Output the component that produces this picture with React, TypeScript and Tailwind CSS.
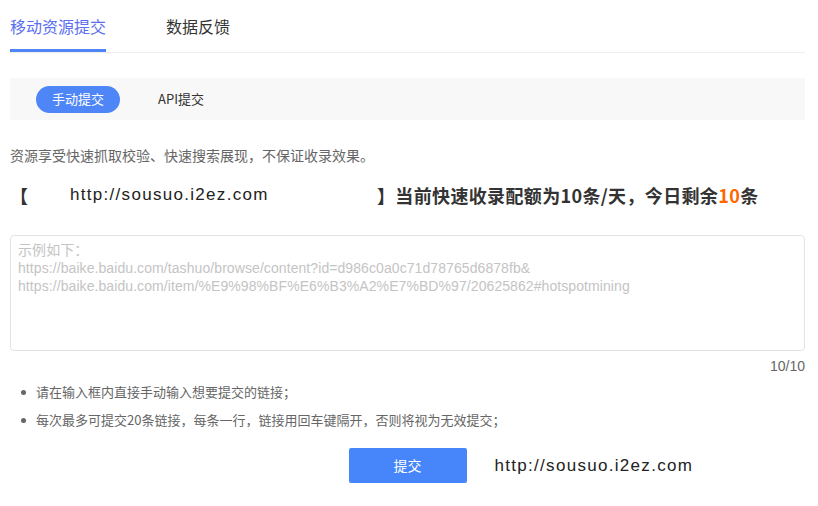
import { useState } from "react";

const tabs = ["移动资源提交", "数据反馈"];
const tips = [
  "请在输入框内直接手动输入想要提交的链接；",
  "每次最多可提交20条链接，每条一行，链接用回车键隔开，否则将视为无效提交；",
];

const placeholder =
  "示例如下：\nhttps://baike.baidu.com/tashuo/browse/content?id=d986c0a0c71d78765d6878fb&\nhttps://baike.baidu.com/item/%E9%98%BF%E6%B3%A2%E7%BD%97/20625862#hotspotmining";

export default function App() {
  const [tab, setTab] = useState(0);
  const [mode, setMode] = useState(0);
  const [links, setLinks] = useState("");

  return (
    <div className="w-[818px] h-[506px] bg-white pl-[10px] pr-[13px] overflow-hidden font-['Liberation_Sans','Noto_Sans_CJK_SC',sans-serif]">
      {/* Top tabs */}
      <div className="flex h-[53px] border-b border-[#eeeeee] gap-[60px]">
        {tabs.map((t, i) => (
          <button
            key={t}
            onClick={() => setTab(i)}
            className={
              "h-[52px] flex items-center pt-[3px] border-b-[3px] text-[16px] font-['Noto_Sans_CJK_SC',sans-serif] " +
              (tab === i ? "border-[#4e86f8] text-[#5b6ff0]" : "border-transparent text-[#333333]")
            }
          >
            {t}
          </button>
        ))}
      </div>

      {/* Sub tabs */}
      <div className="mt-[25px] h-[42px] bg-[#f8f8f8] flex items-center pl-[26px] gap-[38px]">
        <button
          onClick={() => setMode(0)}
          className={
            "h-[27px] w-[84px] rounded-full text-[13px] font-['Noto_Sans_CJK_SC',sans-serif] " +
            (mode === 0 ? "bg-[#4e86f8] text-white" : "text-[#333333]")
          }
        >
          手动提交
        </button>
        <button
          onClick={() => setMode(1)}
          className={
            "h-[27px] rounded-full text-[13px] font-['Noto_Sans_CJK_SC',sans-serif] " +
            (mode === 1 ? "bg-[#4e86f8] text-white px-[14px]" : "text-[#333333]")
          }
        >
          API提交
        </button>
      </div>

      <p className="mt-[25px] text-[14px] leading-[20px] text-[#666666] font-['Noto_Sans_CJK_SC',sans-serif]">
        资源享受快速抓取校验、快速搜索展现，不保证收录效果。
      </p>

      {/* Quota line */}
      <div className="mt-[16px] flex items-center h-[28px] text-[18px] font-bold text-[#333333] tracking-[0.35px] font-['Noto_Sans_CJK_SC',sans-serif]">
        <span className="w-[18px]">【</span>
        <span className="ml-[42px] w-[307px] text-[17px] font-normal tracking-[1.3px] text-[#222222] font-['Liberation_Sans',sans-serif]">
          http://sousuo.i2ez.com
        </span>
        <span>
          】当前快速收录配额为10条/天，今日剩余<span className="text-[#ff6600]">10</span>条
        </span>
      </div>

      {/* Input */}
      <textarea
        value={links}
        onChange={(e) => setLinks(e.target.value)}
        placeholder={placeholder}
        className="mt-[26px] block w-full h-[116px] resize-none border border-[#e3e3e3] rounded-[4px] pt-[5px] px-[7px] text-[14px] leading-[18px] text-[#333333] outline-none placeholder:text-[#c4c4c4] font-['Liberation_Sans','Noto_Sans_CJK_SC',sans-serif] tracking-[0.08px]"
      />
      <div className="mt-[5px] text-right text-[14px] leading-[20px] text-[#666666]">10/10</div>

      {/* Tips */}
      <ul className="mt-[6px] flex flex-col gap-[8px]">
        {tips.map((t) => (
          <li key={t} className="flex items-center text-[13px] leading-[20px] text-[#666666] font-['Noto_Sans_CJK_SC',sans-serif]">
            <span className="ml-[11px] mr-[10px] w-[5px] h-[5px] rounded-full bg-[#666666]" />
            {t}
          </li>
        ))}
      </ul>

      {/* Submit */}
      <div className="mt-[18px] grid grid-cols-[1fr_auto_1fr] items-center">
        <div />
        <button className="w-[118px] h-[35px] rounded-[2px] bg-[#4686fa] text-white text-[14px] font-['Noto_Sans_CJK_SC',sans-serif]">
          提交
        </button>
        <span className="ml-[28px] text-[17px] tracking-[1.3px] text-[#222222] font-['Liberation_Sans',sans-serif]">
          http://sousuo.i2ez.com
        </span>
      </div>
    </div>
  );
}
